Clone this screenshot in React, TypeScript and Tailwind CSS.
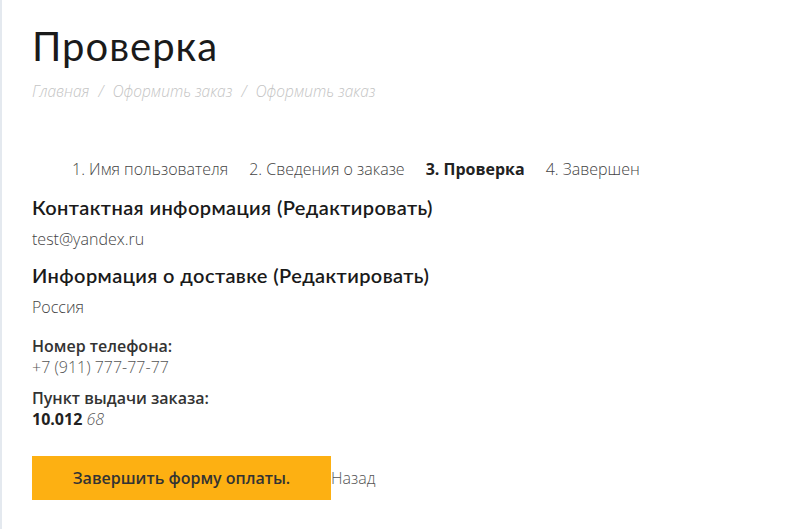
import React from 'react';

const steps = [
  { label: '1. Имя пользователя', active: false },
  { label: '2. Сведения о заказе', active: false },
  { label: '3. Проверка', active: true },
  { label: '4. Завершен', active: false },
];

const headFont = "font-['Lato','Noto_Sans',sans-serif]";

const App = () => {
  return (
    <div className="min-h-screen bg-white border-l-2 border-l-[#e4e9ef] font-['Open_Sans',sans-serif] text-[#333]">
      <div className="pl-[30px] pt-[22px]">
        {/* Page title + breadcrumbs */}
        <h1 className={`${headFont} text-[40px] leading-[48px] tracking-[1px] font-normal text-[#1a1a1a]`}>Проверка</h1>
        <div className="mt-[10px] text-[15.5px] italic font-light text-[#c4c4c4] leading-[22px]">
          Главная <span className="mx-[5px]">/</span> Оформить заказ <span className="mx-[5px]">/</span> Оформить заказ
        </div>

        {/* Checkout steps */}
        <ol className="mt-[56px] pl-[40px] flex gap-[21px] text-[16px] leading-[22px] font-light text-[#444]">
          {steps.map((s) => (
            <li key={s.label} className={s.active ? 'font-bold text-[#222]' : ''}>
              {s.label}
            </li>
          ))}
        </ol>

        {/* Contact */}
        <h2 className={`${headFont} mt-[14px] text-[20px] leading-[26px] tracking-[0.4px] font-semibold text-[#1a1a1a]`}>
          Контактная информация (Редактировать)
        </h2>
        <p className="mt-[8px] text-[16px] leading-[22px] font-light text-[#444]">test@yandex.ru</p>

        {/* Delivery */}
        <h2 className={`${headFont} mt-[12px] text-[20px] leading-[26px] tracking-[0.4px] font-semibold text-[#1a1a1a]`}>
          Информация о доставке (Редактировать)
        </h2>
        <p className="mt-[8px] text-[16px] leading-[22px] font-light text-[#444]">Россия</p>

        <div className="mt-[18px] text-[16px] leading-[21px]">
          <div className="font-semibold text-[#333]">Номер телефона:</div>
          <div className="font-light text-[#555]">+7 (911) 777-77-77</div>
        </div>
        <div className="mt-[10px] text-[16px] leading-[21px]">
          <div className="font-semibold text-[#333]">Пункт выдачи заказа:</div>
          <div>
            <span className="font-bold text-[#222]">10.012</span>{' '}
            <span className="italic font-light text-[#555]">68</span>
          </div>
        </div>

        {/* Actions */}
        <div className="mt-[26px] flex items-center">
          <button className="w-[299px] h-[44px] bg-[#fdb012] text-[16px] font-semibold text-[#333]">
            Завершить форму оплаты.
          </button>
          <a className="text-[16px] font-light text-[#555]">Назад</a>
        </div>
      </div>
    </div>
  );
};

export default App;
